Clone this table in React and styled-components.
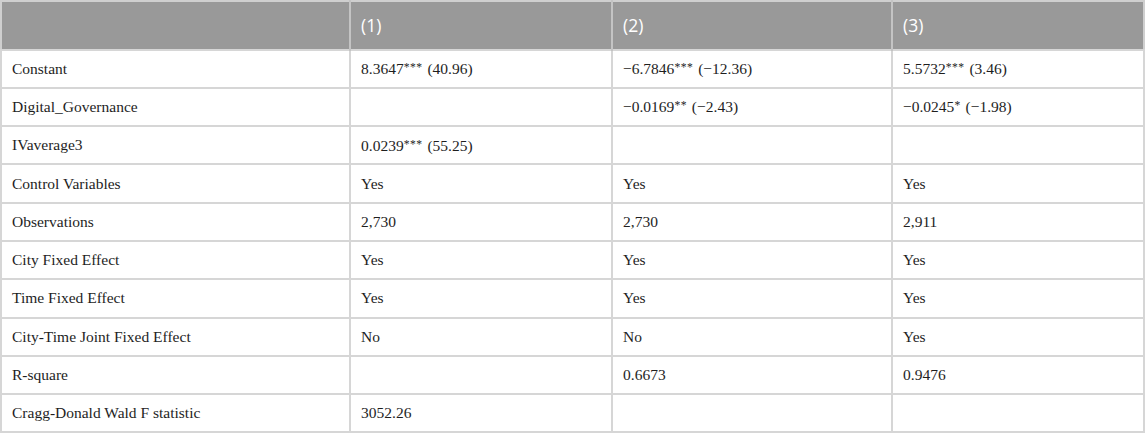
import styled, { createGlobalStyle } from "styled-components";

const GlobalStyle = createGlobalStyle`
  body {
    margin: 0;
    background: #fff;
  }
`;

const rows = [
  ["Constant", "8.3647*** (40.96)", "\u22126.7846*** (\u221212.36)", "5.5732*** (3.46)"],
  ["Digital_Governance", "", "\u22120.0169** (\u22122.43)", "\u22120.0245* (\u22121.98)"],
  ["IVaverage3", "0.0239*** (55.25)", "", ""],
  ["Control Variables", "Yes", "Yes", "Yes"],
  ["Observations", "2,730", "2,730", "2,911"],
  ["City Fixed Effect", "Yes", "Yes", "Yes"],
  ["Time Fixed Effect", "Yes", "Yes", "Yes"],
  ["City-Time Joint Fixed Effect", "No", "No", "Yes"],
  ["R-square", "", "0.6673", "0.9476"],
  ["Cragg-Donald Wald F statistic", "3052.26", "", ""],
];

const App = () => {
  return (
    <>
      <GlobalStyle />
      <Table>
        <colgroup>
          <col style={{ width: 349 }} />
          <col style={{ width: 262 }} />
          <col style={{ width: 280 }} />
          <col />
        </colgroup>
        <thead>
          <HeadRow>
            <Head></Head>
            <Head>(1)</Head>
            <Head>(2)</Head>
            <Head>(3)</Head>
          </HeadRow>
        </thead>
        <tbody>
          {rows.map((r) => (
            <Row key={r[0]}>
              {r.map((c, i) => (
                <Cell key={i}>{renderStars(c)}</Cell>
              ))}
            </Row>
          ))}
        </tbody>
      </Table>
    </>
  );
};

// stars sit a bit higher and smaller, like in the source
const renderStars = (text) => {
  const m = text.match(/^([^*]+)(\*+)(.*)$/);
  if (!m) return text;
  return (
    <>
      {m[1]}
      <Stars>{m[2]}</Stars>
      {m[3]}
    </>
  );
};

const Table = styled.table`
  width: 1145px;
  border-collapse: collapse;
  table-layout: fixed;
  border: 2px solid #cfcfcf;
`;

const HeadRow = styled.tr`
  height: 48.5px;
`;

const Row = styled.tr`
  height: 38.3px;
`;

const Head = styled.th`
  padding: 0 10px;
  background: #999999;
  color: #fff;
  font-family: "Open Sans", "Noto Sans", sans-serif;
  font-size: 17.5px;
  font-weight: 400;
  text-align: left;
  border-left: 2px solid #c4c4c4;
  &:first-child {
    border-left: none;
  }
`;

const Cell = styled.td`
  padding: 0 10px;
  color: #1e1e1e;
  font-family: "Liberation Serif", "Times New Roman", serif;
  font-size: 15.5px;
  line-height: 18px;
  text-align: left;
  white-space: nowrap;
  border: 2px solid #d6d6d6;
`;

const Stars = styled.span`
  font-size: 0.75em;
  vertical-align: 0.3em;
  letter-spacing: 0.5px;
  margin-right: 1px;
`;

export default App;
